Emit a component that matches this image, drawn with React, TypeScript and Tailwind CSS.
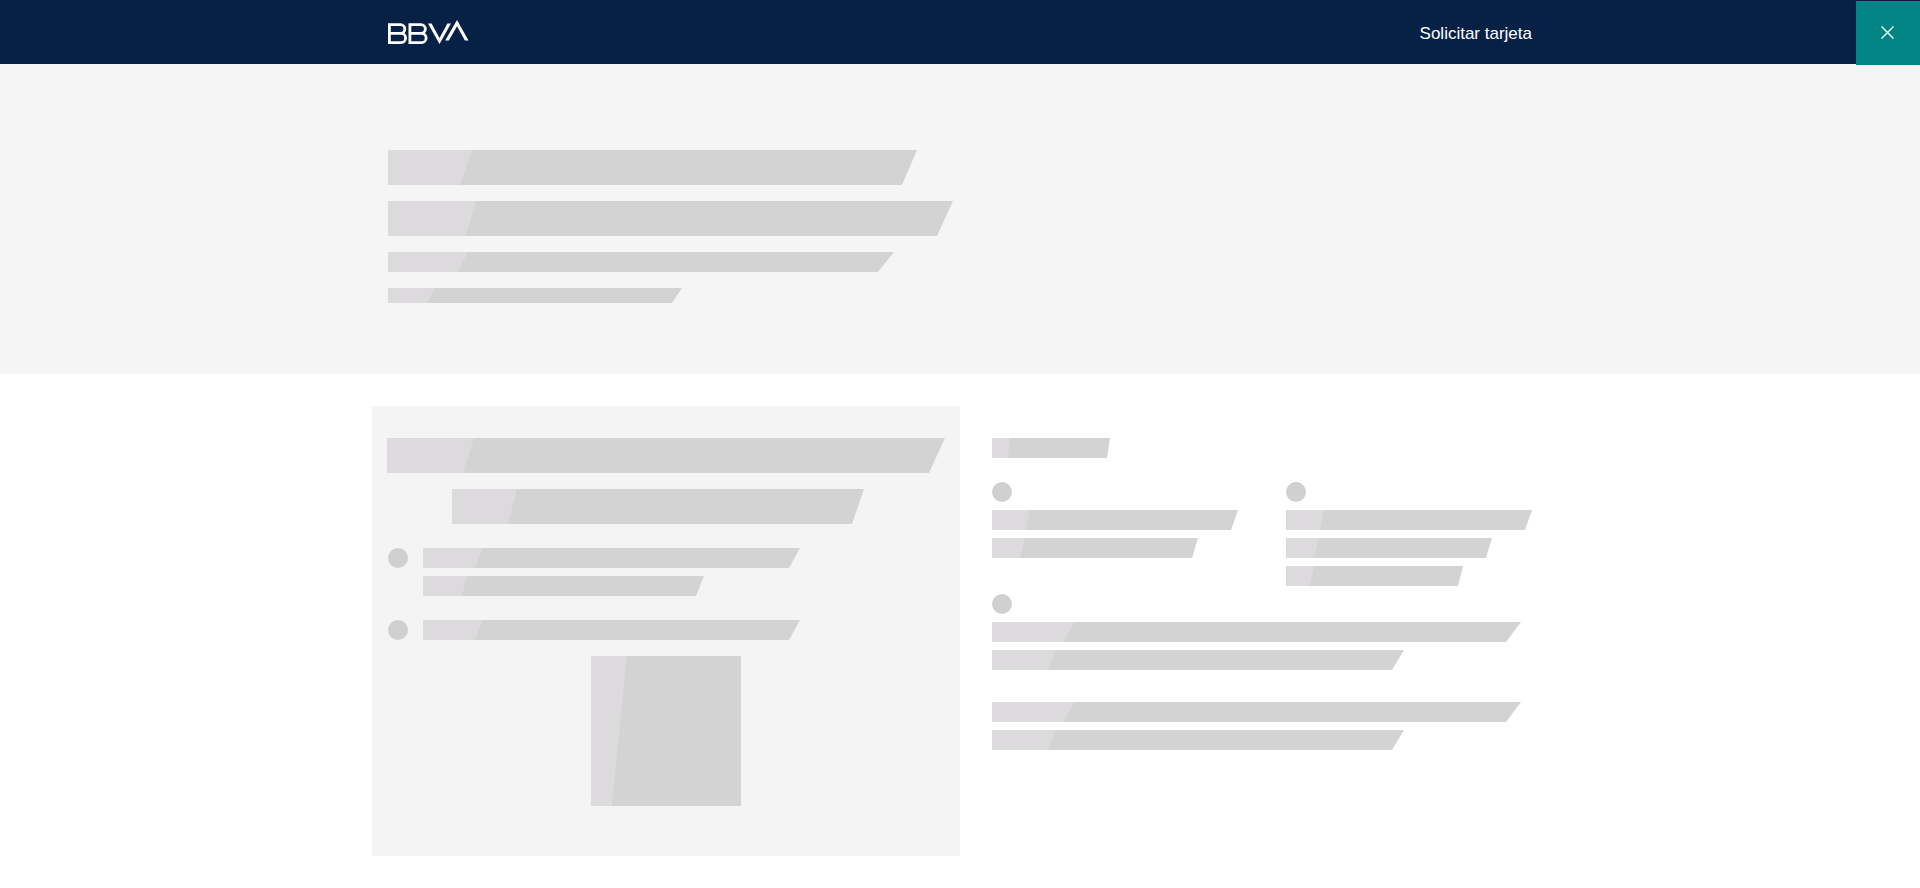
function Bar({ box, shine }: { box: string; shine: string }) {
  return (
    <div className={`relative shrink-0 bg-[#d3d3d3] ${box}`}>
      <div className={`absolute left-0 top-0 h-full bg-[#dcdadc] ${shine}`} />
    </div>
  );
}

function Dot() {
  return <div className="size-5 shrink-0 rounded-full bg-[#d0d0d0]" />;
}

const WIDE_A = "h-5 w-[529px] [clip-path:polygon(0_0,529px_0,514px_100%,0_100%)]";
const WIDE_A_SHINE = "w-[83px] [clip-path:polygon(0_0,83px_0,71px_100%,0_100%)]";
const WIDE_B = "h-5 w-[412px] [clip-path:polygon(0_0,412px_0,400px_100%,0_100%)]";
const WIDE_B_SHINE = "w-[64px] [clip-path:polygon(0_0,64px_0,56px_100%,0_100%)]";
const PANEL_C = "h-5 w-[377px] [clip-path:polygon(0_0,377px_0,366px_100%,0_100%)]";
const PANEL_C_SHINE = "w-[60px] [clip-path:polygon(0_0,60px_0,52px_100%,0_100%)]";
const COL_A = "h-5 w-[246px] [clip-path:polygon(0_0,246px_0,239px_100%,0_100%)]";
const COL_A_SHINE = "w-[38px] [clip-path:polygon(0_0,38px_0,34px_100%,0_100%)]";
const COL_B = "h-5 w-[206px] [clip-path:polygon(0_0,206px_0,200px_100%,0_100%)]";
const COL_B_SHINE = "w-[33px] [clip-path:polygon(0_0,33px_0,28px_100%,0_100%)]";

function Logo() {
  const b = "M1.4 13.4V4.7H12.5a4.35 4.35 0 0 1 0 8.7H1.4V22.6H13a4.6 4.6 0 0 0 0-9.2H12.5";
  return (
    <svg width="81" height="24" viewBox="0 0 81 24" fill="none" aria-label="BBVA">
      <g stroke="#ffffff" strokeWidth="2.8">
        <path d={b} />
        <path d={b} transform="translate(20.5 0)" />
      </g>
      <path fill="#ffffff" d="M40 3.5h3.6L51.5 18 59.4 3.5H63L51.5 24Z" />
      <path fill="#ffffff" d="M69 0 80.5 20.5h-3.6L69 6.2 60.8 20.5h-3.6Z" />
    </svg>
  );
}

export default function App() {
  return (
    <div className="min-h-[888px] bg-white font-['Liberation_Sans',Arial,sans-serif]">
      <header className="relative h-16 bg-[#072146]">
        <div className="mx-auto flex h-full w-[1144px] items-center justify-between">
          <Logo />
          <span className="mt-[3px] text-[17px] text-white">Solicitar tarjeta</span>
        </div>
        <button
          aria-label="Cerrar"
          className="absolute right-0 top-px flex size-16 items-center justify-center bg-[#028484]"
        >
          <svg width="13" height="13" viewBox="0 0 13 13" fill="none" stroke="#ffffff" strokeWidth="1.4" className="-mt-px -ml-px">
            <path d="M0.5 0.5 12.5 12.5M12.5 0.5 0.5 12.5" />
          </svg>
        </button>
      </header>

      <section className="h-[310px] bg-[#f5f5f5] pt-[86px]">
        <div className="mx-auto flex w-[1144px] flex-col gap-4">
          <Bar
            box="h-[35px] w-[529px] [clip-path:polygon(0_0,529px_0,514px_100%,0_100%)]"
            shine="w-[84px] [clip-path:polygon(0_0,84px_0,72px_100%,0_100%)]"
          />
          <Bar
            box="h-[35px] w-[565px] [clip-path:polygon(0_0,565px_0,549px_100%,0_100%)]"
            shine="w-[88px] [clip-path:polygon(0_0,88px_0,78px_100%,0_100%)]"
          />
          <Bar
            box="h-5 w-[506px] [clip-path:polygon(0_0,506px_0,490px_100%,0_100%)]"
            shine="w-[80px] [clip-path:polygon(0_0,80px_0,70px_100%,0_100%)]"
          />
          <Bar
            box="h-[15px] w-[294px] [clip-path:polygon(0_0,294px_0,284px_100%,0_100%)]"
            shine="w-[46px] [clip-path:polygon(0_0,46px_0,40px_100%,0_100%)]"
          />
        </div>
      </section>

      <main className="mx-auto mt-8 flex w-[1176px] items-start gap-8">
        <div className="h-[450px] w-[588px] shrink-0 bg-[#f4f4f4] px-4 pt-8">
          <div className="-ml-px">
            <Bar
              box="h-[35px] w-[558px] [clip-path:polygon(0_0,558px_0,542px_100%,0_100%)]"
              shine="w-[87px] [clip-path:polygon(0_0,87px_0,76px_100%,0_100%)]"
            />
          </div>
          <div className="ml-[64px] mt-4">
            <Bar
              box="h-[35px] w-[412px] [clip-path:polygon(0_0,412px_0,400px_100%,0_100%)]"
              shine="w-[65px] [clip-path:polygon(0_0,65px_0,56px_100%,0_100%)]"
            />
          </div>
          <div className="mt-6 flex gap-[15px]">
            <Dot />
            <div className="flex flex-col gap-2">
              <Bar box={PANEL_C} shine={PANEL_C_SHINE} />
              <Bar
                box="h-5 w-[281px] [clip-path:polygon(0_0,281px_0,273px_100%,0_100%)]"
                shine="w-[44px] [clip-path:polygon(0_0,44px_0,39px_100%,0_100%)]"
              />
            </div>
          </div>
          <div className="mt-6 flex gap-[15px]">
            <Dot />
            <Bar box={PANEL_C} shine={PANEL_C_SHINE} />
          </div>
          <div className="mx-auto mt-4 w-[150px]">
            <Bar box="h-[150px] w-[150px]" shine="w-[36px] [clip-path:polygon(0_0,36px_0,21px_100%,0_100%)]" />
          </div>
        </div>

        <div className="flex min-w-0 flex-1 flex-col pt-8">
          <Bar
            box="h-5 w-[118px] [clip-path:polygon(0_0,118px_0,115px_100%,0_100%)]"
            shine="w-[18px] [clip-path:polygon(0_0,18px_0,16px_100%,0_100%)]"
          />
          <div className="mt-6 grid grid-cols-[294px_1fr]">
            <div className="flex flex-col gap-2">
              <Dot />
              <Bar box={COL_A} shine={COL_A_SHINE} />
              <Bar box={COL_B} shine={COL_B_SHINE} />
            </div>
            <div className="flex flex-col gap-2">
              <Dot />
              <Bar box={COL_A} shine={COL_A_SHINE} />
              <Bar box={COL_B} shine={COL_B_SHINE} />
              <Bar
                box="h-5 w-[177px] [clip-path:polygon(0_0,177px_0,172px_100%,0_100%)]"
                shine="w-[28px] [clip-path:polygon(0_0,28px_0,24px_100%,0_100%)]"
              />
            </div>
          </div>
          <div className="mt-2 flex flex-col gap-2">
            <Dot />
            <Bar box={WIDE_A} shine={WIDE_A_SHINE} />
            <Bar box={WIDE_B} shine={WIDE_B_SHINE} />
          </div>
          <div className="mt-8 flex flex-col gap-2">
            <Bar box={WIDE_A} shine={WIDE_A_SHINE} />
            <Bar box={WIDE_B} shine={WIDE_B_SHINE} />
          </div>
        </div>
      </main>
    </div>
  );
}
